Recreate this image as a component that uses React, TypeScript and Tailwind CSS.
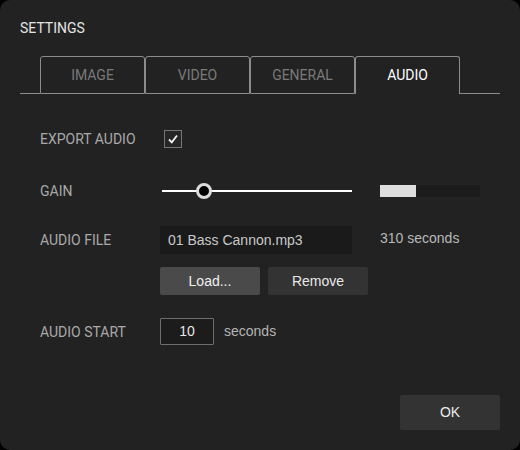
import React from "react";

const tabs = ["IMAGE", "VIDEO", "GENERAL", "AUDIO"];

export default function App() {
  const label = "w-[120px] pt-px text-[14px] text-[#a9a9a9] font-['Roboto',sans-serif]";
  const ui = "font-['Liberation_Sans',Arial,sans-serif]";
  const active = "AUDIO";

  return (
    <div className="w-[520px] h-[450px] bg-black">
      <div className="w-full h-full rounded-[10px] bg-[#222222] flex flex-col px-5 pt-[20px]">
        <div className="text-[14px] leading-[16px] text-[#e4e4e4] font-['Roboto',sans-serif]">SETTINGS</div>

        {/* tabs */}
        <div className="flex mt-[20px] h-[38px]">
          <div className="w-5 border-b border-[#8c8c8c]" />
          {tabs.map((t) => (
            <div
              key={t}
              className={`w-[105px] flex items-center justify-center rounded-t-[3px] border-t border-l border-r border-[#8c8c8c] text-[14px] font-['Roboto',sans-serif] ${
                t === active ? "text-white border-b-0 pb-px" : "text-[#7a7a7a] border-b"
              }`}
            >
              {t}
            </div>
          ))}
          <div className="flex-1 border-b border-[#8c8c8c]" />
        </div>

        <div className="flex flex-col px-5">
          {/* export audio */}
          <div className="flex items-center h-[18px] mt-[36px]">
            <span className={label}>EXPORT AUDIO</span>
            <div className="ml-[4px] w-[18px] h-[18px] border border-[#777] bg-[#262626] flex items-center justify-center">
              <svg width="12" height="12" viewBox="0 0 12 12">
                <polyline points="2,6.5 4.8,9.3 10,2.5" fill="none" stroke="#f2f2f2" strokeWidth="1.8" />
              </svg>
            </div>
          </div>

          {/* gain */}
          <div className="flex items-center h-[18px] mt-[34px]">
            <span className={label}>GAIN</span>
            <div className="relative ml-[2px] w-[190px] h-[18px] flex items-center">
              <div className="w-full h-[2px] bg-white" />
              <div className="absolute left-[34px] top-px w-[16px] h-[16px] rounded-full border-[3px] border-[#dcdcdc] bg-black" />
            </div>
            <div className="ml-[28px] w-[100px] h-[12px] bg-[#1b1b1b] flex">
              <div className="w-[36px] h-full bg-[#dedede]" />
            </div>
          </div>

          {/* audio file */}
          <div className="flex items-center h-[28px] mt-[26px]">
            <span className={label}>AUDIO FILE</span>
            <div className={`w-[192px] h-[28px] bg-[#1a1a1a] flex items-center pl-2 text-[14px] text-[#c9c9c9] ${ui}`}>
              01 Bass Cannon.mp3
            </div>
            <span className={`ml-[28px] -mt-[3px] text-[14px] text-[#b9b9b9] ${ui}`}>310 seconds</span>
          </div>

          <div className="flex gap-2 ml-[120px] mt-[13px]">
            <button className={`w-[100px] h-[28px] rounded-[2px] bg-[#4a4a4a] text-[14px] text-[#f0f0f0] ${ui}`}>Load...</button>
            <button className={`w-[100px] h-[28px] rounded-[2px] bg-[#333333] text-[14px] text-[#e8e8e8] ${ui}`}>Remove</button>
          </div>

          {/* audio start */}
          <div className="flex items-center h-[27px] mt-[23px]">
            <span className={label}>AUDIO START</span>
            <div className={`w-[54px] h-[27px] border border-[#6e6e6e] rounded-[1px] bg-[#1c1c1c] flex items-center justify-center text-[14px] text-[#e6e6e6] ${ui}`}>
              10
            </div>
            <span className={`ml-[10px] text-[14px] text-[#b4b4b4] ${ui}`}>seconds</span>
          </div>
        </div>

        <div className="flex justify-end mt-[50px]">
          <button className={`w-[100px] h-[35px] rounded-[2px] bg-[#333333] text-[14px] text-[#ececec] ${ui}`}>OK</button>
        </div>
      </div>
    </div>
  );
}
